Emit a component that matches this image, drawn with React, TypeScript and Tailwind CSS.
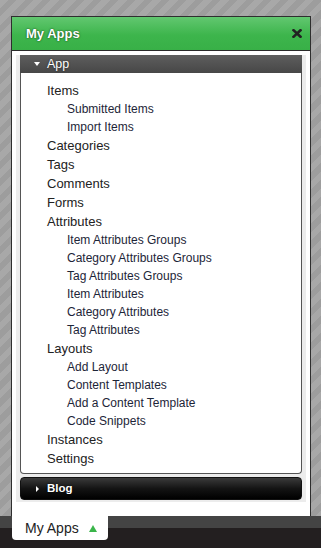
import React from 'react';

type Link = { label: string; sub?: boolean };

const links: Link[] = [
    { label: 'Items' },
    { label: 'Submitted Items', sub: true },
    { label: 'Import Items', sub: true },
    { label: 'Categories' },
    { label: 'Tags' },
    { label: 'Comments' },
    { label: 'Forms' },
    { label: 'Attributes' },
    { label: 'Item Attributes Groups', sub: true },
    { label: 'Category Attributes Groups', sub: true },
    { label: 'Tag Attributes Groups', sub: true },
    { label: 'Item Attributes', sub: true },
    { label: 'Category Attributes', sub: true },
    { label: 'Tag Attributes', sub: true },
    { label: 'Layouts' },
    { label: 'Add Layout', sub: true },
    { label: 'Content Templates', sub: true },
    { label: 'Add a Content Template', sub: true },
    { label: 'Code Snippets', sub: true },
    { label: 'Instances' },
    { label: 'Settings' },
];

const CloseIcon = () => (
    <svg width="10" height="9" viewBox="0 0 10 9" className="block">
        <path d="M1.5 1.2 L8.5 7.8 M8.5 1.2 L1.5 7.8" stroke="#222" strokeWidth="2.6" strokeLinecap="square" />
    </svg>
);

export default function App() {
    return (
        <div className="w-[321px] h-[548px] flex flex-col overflow-hidden font-['Liberation_Sans',Arial,sans-serif] bg-[repeating-linear-gradient(135deg,#a8a8a8_0px,#a8a8a8_6px,#9d9d9d_6px,#9d9d9d_12px)]">
            <div className="flex-1 pt-[16px] pl-[11px] pr-[10px] flex flex-col">
                <div className="flex-1 flex flex-col border border-b-0 border-[#2e2e2e] bg-white">
                    {/* green title bar */}
                    <div className="h-[34px] shrink-0 flex items-center justify-between pl-[14px] pr-[8px] border-b border-[#2a2a2a] bg-[linear-gradient(#62c770,#3db54c_55%,#38b047)]">
                        <span className="text-white text-[13px] font-bold [text-shadow:0_0_2px_rgba(0,0,0,0.75)]">My Apps</span>
                        <CloseIcon />
                    </div>

                    <div className="pt-[4px] pl-[4px] pr-[4px]">
                        <div className="bg-[#ececec] px-[4px] pb-[2px]">
                            {/* App section */}
                            <div className="h-[18px] flex items-center bg-[linear-gradient(#5e5e5e,#474747)] pl-[14px]">
                                <span className="w-0 h-0 border-l-[3.5px] border-r-[3.5px] border-t-[4px] border-l-transparent border-r-transparent border-t-white" />
                                <span className="ml-[7px] text-white text-[12.5px] [text-shadow:0_0_2px_rgba(0,0,0,0.6)]">App</span>
                            </div>
                            <ul className="bg-white border border-t-0 border-[#555] rounded-b-[4px] pt-[8px] pb-[5px]">
                                {links.map((l) => (
                                    <li
                                        key={l.label}
                                        className={
                                            l.sub
                                                ? 'pl-[46px] text-[12px] leading-[18px] text-[#1d2538]'
                                                : 'pl-[26px] text-[13px] leading-[19px] text-[#222]'
                                        }
                                    >
                                        {l.label}
                                    </li>
                                ))}
                            </ul>

                            {/* Blog section */}
                            <div className="mt-[3px] h-[23px] flex items-center rounded-[4px] border border-[#111] bg-[linear-gradient(#3a3a3a,#141414_50%,#000)] pl-[15px]">
                                <span className="w-0 h-0 border-t-[3px] border-b-[3px] border-l-[3.5px] border-t-transparent border-b-transparent border-l-white" />
                                <span className="ml-[8px] text-white text-[11.5px] font-bold [text-shadow:0_0_2px_rgba(0,0,0,0.8)]">Blog</span>
                            </div>
                        </div>
                    </div>
                </div>
            </div>

            {/* bottom bar with tab */}
            <div className="h-[32px] shrink-0 bg-[linear-gradient(#444_0px,#444_12px,#231f20_12px)]">
                <div className="ml-[12px] w-[96px] h-[24px] bg-white rounded-b-[4px] flex items-center pl-[13px]">
                    <span className="text-[14px] text-[#222] leading-none">My Apps</span>
                    <span className="ml-[10px] w-0 h-0 border-l-[4.5px] border-r-[4.5px] border-b-[7px] border-l-transparent border-r-transparent border-b-[#3ab54a]" />
                </div>
            </div>
        </div>
    );
}
